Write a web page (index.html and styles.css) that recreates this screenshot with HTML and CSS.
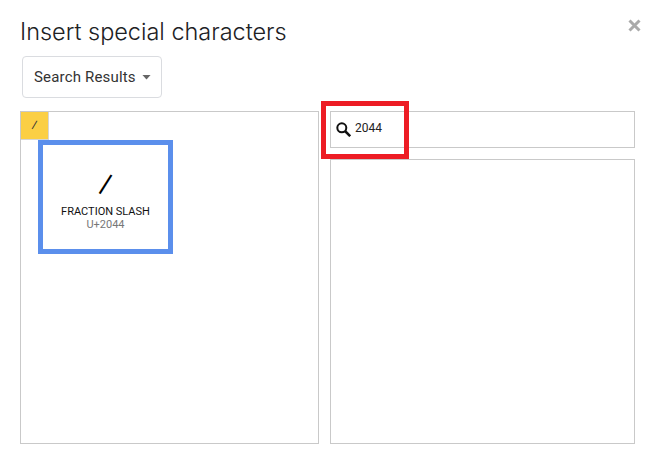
FILE: index.html
```html
<!DOCTYPE html>
<html lang="en">

<head>
  <meta charset="UTF-8">
  <meta name="viewport" content="width=device-width, initial-scale=1.0">
  <title>Insert special characters</title>
  <link rel="stylesheet" href="styles.css">
</head>

<body>
  <div class="dialog">
    <div class="header">
      <h2 class="title">Insert special characters</h2>
      <svg class="close" viewBox="0 0 13 13" role="button" aria-label="Close">
        <path d="M1.5 1.5L11.5 11.5M11.5 1.5L1.5 11.5" />
      </svg>
    </div>

    <div class="category">
      <span class="category-name">Search Results</span>
      <span class="arrow"></span>
    </div>

    <div class="content">
      <div class="results">
        <div class="cell">⁄</div>
        <div class="preview">
          <div class="char">⁄</div>
          <div class="name">FRACTION SLASH</div>
          <div class="code">U+2044</div>
        </div>
      </div>
      <div class="side">
        <div class="search">
          <svg class="search-icon" viewBox="0 0 15 15">
            <circle cx="5.8" cy="5.8" r="4.5" />
            <path d="M9 9L14.2 14.2" />
          </svg>
          <span class="query">2044</span>
          <div class="highlight"></div>
        </div>
        <div class="draw"></div>
      </div>
    </div>
  </div>
</body>

</html>
```
FILE: styles.css
```css
* {
  box-sizing: border-box;
}

body {
  margin: 0;
  background: #fff;
  font-family: Roboto, "Liberation Sans", sans-serif;
}

.dialog {
  height: 463px;
  padding: 16px 20px 19px;
  display: flex;
  flex-direction: column;
}

.header {
  display: flex;
  justify-content: space-between;
  height: 40px;
}

.title {
  margin: 0;
  font-family: Inter, sans-serif;
  font-size: 23.5px;
  font-weight: 300;
  line-height: 31px;
  letter-spacing: -0.02px;
  color: #202124;
  white-space: nowrap;
}

.close {
  width: 13px;
  height: 13px;
  margin: 3px -6px 0 0;
  fill: none;
  stroke: #aaa;
  stroke-width: 3;
}

.category {
  display: flex;
  align-items: center;
  justify-content: space-between;
  width: 140px;
  height: 42px;
  margin: 0 0 13px 2px;
  padding: 0 10px 0 11px;
  border: 1px solid #dadce0;
  border-radius: 4px;
}

.category-name {
  font-size: 15px;
  letter-spacing: 0.17px;
  color: #333;
}

/* .5px side borders get floored, so the triangle is clipped instead */
.arrow {
  width: 9px;
  height: 5px;
  background: #666;
  clip-path: polygon(0 0, 100% 0, 50% 100%);
}

.content {
  flex: 1;
  display: grid;
  grid-template-columns: 299px 305px;
  gap: 11px;
}

.results {
  position: relative;
  border: 1px solid #c9c9c9;
}

.cell {
  width: 28px;
  height: 28px;
  border: 1px solid #d5d5d5;
  border-width: 0 1px 1px 0;
  background: #fbcf44;
  color: #333;
  font-size: 14px;
  line-height: 26px;
  text-align: center;
}

/* hover card over the grid of characters */
.preview {
  position: absolute;
  top: 28px;
  left: 17px;
  width: 135px;
  height: 114px;
  padding-top: 21px;
  border: 5px solid #5b8fec;
  background: #fff;
  text-align: center;
  font-size: 11px;
  line-height: 13px;
}

.char {
  height: 39px;
  font-size: 34px;
  line-height: 36px;
}

.name {
  color: #111;
}

.code {
  color: #777;
}

.side {
  display: grid;
  grid-template-rows: 37px 1fr;
  gap: 11px;
}

.search {
  position: relative;
  display: flex;
  align-items: flex-start;
  gap: 4px;
  padding: 9px 5px;
  border: 1px solid #c9c9c9;
}

.search-icon {
  width: 15px;
  height: 15px;
  margin-top: 1px;
  fill: none;
  stroke: #111;
  stroke-width: 2;
}

.search-icon path {
  stroke-width: 2.5;
}

.query {
  font-size: 12px;
  line-height: 14px;
  color: #222;
}

.highlight {
  position: absolute;
  top: -11px;
  left: -10px;
  width: 88px;
  height: 58px;
  border: 5px solid #ed1c24;
}

.draw {
  border: 1px solid #c9c9c9;
}
```
